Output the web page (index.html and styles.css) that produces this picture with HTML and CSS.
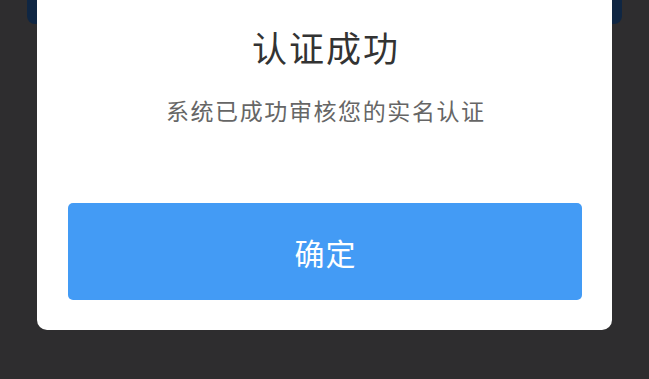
FILE: index.html
```html
<!DOCTYPE html>
<html lang="zh">
<head>
<meta charset="utf-8">
<link rel="stylesheet" href="styles.css">
</head>
<body>
<div class="page">
  <div class="page-card"></div>
</div>
<div class="mask">
  <div class="dialog">
    <div class="dialog-title">认证成功</div>
    <div class="dialog-text">系统已成功审核您的实名认证</div>
    <button class="dialog-btn">确定</button>
  </div>
</div>
</body>
</html>
```
FILE: styles.css
```css
html, body {
  margin: 0;
  padding: 0;
}
body {
  width: 649px;
  height: 379px;
  background: #2e2d2f;
  font-family: "Noto Sans CJK SC", "Noto Sans", sans-serif;
  overflow: hidden;
  position: relative;
}
.page {
  padding: 0 27px;
}
.page-card {
  height: 24px;
  background: #0f2643;
  border-radius: 0 0 8px 8px;
}
.mask {
  position: absolute;
  left: 0;
  top: 0;
  right: 0;
  bottom: 0;
}
.dialog {
  margin: 0 37px;
  width: 575px;
  height: 330px;
  box-sizing: border-box;
  background: #ffffff;
  border-radius: 0 0 10px 10px;
  padding: 27px 30px 30px 31px;
  display: flex;
  flex-direction: column;
  align-items: center;
}
.dialog-title {
  font-size: 35px;
  line-height: 40px;
  color: #333333;
  letter-spacing: 2px;
  padding-left: 2px;
}
.dialog-text {
  margin-top: 28px;
  font-size: 23px;
  line-height: 30px;
  color: #666666;
  letter-spacing: 1.6px;
  padding-left: 1.6px;
}
.dialog-btn {
  margin-top: auto;
  width: 100%;
  height: 97px;
  border: none;
  border-radius: 5px;
  background: #439bf5;
  color: #ffffff;
  font-family: inherit;
  font-size: 30px;
  letter-spacing: 1px;
  padding: 0 0 0 1px;
}
```
